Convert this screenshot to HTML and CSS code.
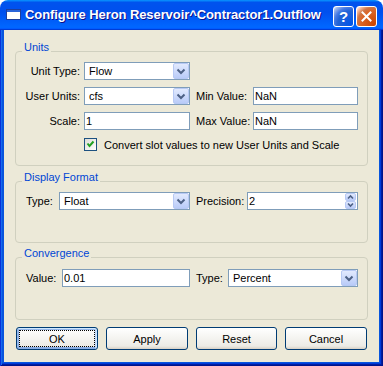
FILE: index.html
```html
<!DOCTYPE html>
<html>
<head>
<meta charset="utf-8">
<link rel="stylesheet" href="styles.css">
</head>
<body>
<div class="window">
  <div class="titlebar">
    <svg class="app-icon" width="16" height="16" viewBox="0 0 16 16">
      <rect x="1.5" y="3.5" width="14" height="10" fill="#fff" stroke="#1d3f9c"/>
      <rect x="2" y="4" width="13" height="2" fill="#2a64d8"/>
    </svg>
    <span class="title">Configure Heron Reservoir^Contractor1.Outflow</span>
    <div class="caption-buttons">
      <span class="cbtn help">?</span>
      <span class="cbtn close"><svg width="13" height="13" viewBox="0 0 13 13"><path d="M2.5 2.5 L10.5 10.5 M10.5 2.5 L2.5 10.5" stroke="#fff" stroke-width="2" stroke-linecap="square"/></svg></span>
    </div>
  </div>
  <div class="frame">
    <div class="client">
      <section class="group units">
        <div class="group-title">Units</div>
        <div class="units-grid">
          <span class="lbl right">Unit Type:</span>
          <div class="combo"><span class="val">Flow</span><span class="drop"><svg width="14" height="14" viewBox="0 0 14 14"><path d="M3.5 5.5 L7 9 L10.5 5.5" fill="none" stroke="#4d6185" stroke-width="2"/></svg></span></div>
          <span></span><span></span>

          <span class="lbl right">User Units:</span>
          <div class="combo"><span class="val">cfs</span><span class="drop"><svg width="14" height="14" viewBox="0 0 14 14"><path d="M3.5 5.5 L7 9 L10.5 5.5" fill="none" stroke="#4d6185" stroke-width="2"/></svg></span></div>
          <span class="lbl pad">Min Value:</span>
          <div class="field">NaN</div>

          <span class="lbl right">Scale:</span>
          <div class="field">1</div>
          <span class="lbl pad">Max Value:</span>
          <div class="field">NaN</div>

          <div class="check-row">
            <span class="checkbox"><svg width="11" height="11" viewBox="0 0 11 11"><path d="M2.5 4.5 L4.5 7 L8.5 2.5" fill="none" stroke="#21a121" stroke-width="2"/></svg></span>
            <span>Convert slot values to new User Units and Scale</span>
          </div>
        </div>
      </section>

      <section class="group display">
        <div class="group-title">Display Format</div>
        <div class="row">
          <span class="lbl w33">Type:</span>
          <div class="combo w131"><span class="val">Float</span><span class="drop"><svg width="14" height="14" viewBox="0 0 14 14"><path d="M3.5 5.5 L7 9 L10.5 5.5" fill="none" stroke="#4d6185" stroke-width="2"/></svg></span></div>
          <span class="lbl pad w57">Precision:</span>
          <div class="field w111"><span class="val">2</span>
            <span class="spin">
              <span class="spin-btn"><svg width="9" height="6" viewBox="0 0 9 6"><path d="M2 4.5 L4.5 2 L7 4.5" fill="none" stroke="#4d6185" stroke-width="1.6"/></svg></span>
              <span class="spin-btn"><svg width="9" height="6" viewBox="0 0 9 6"><path d="M2 1.5 L4.5 4 L7 1.5" fill="none" stroke="#4d6185" stroke-width="1.6"/></svg></span>
            </span>
          </div>
        </div>
      </section>

      <section class="group convergence">
        <div class="group-title">Convergence</div>
        <div class="row">
          <span class="lbl w36">Value:</span>
          <div class="field w128">0.01</div>
          <span class="lbl pad w38">Type:</span>
          <div class="combo w130"><span class="val">Percent</span><span class="drop"><svg width="14" height="14" viewBox="0 0 14 14"><path d="M3.5 5.5 L7 9 L10.5 5.5" fill="none" stroke="#4d6185" stroke-width="2"/></svg></span></div>
        </div>
      </section>

      <div class="buttons">
        <button class="btn default">OK</button>
        <button class="btn">Apply</button>
        <button class="btn">Reset</button>
        <button class="btn">Cancel</button>
      </div>
    </div>
  </div>
</div>
</body>
</html>
```

FILE: styles.css
```css
* { box-sizing: border-box; }
html, body { margin: 0; padding: 0; }
body {
  width: 383px;
  height: 366px;
  overflow: hidden;
  background: #ffffff;
  font-family: "Liberation Sans", Arial, sans-serif;
  font-size: 11px;
  color: #000;
}
.window {
  width: 383px;
  height: 366px;
  display: flex;
  flex-direction: column;
}
.titlebar {
  flex: none;
  height: 30px;
  display: flex;
  align-items: flex-start;
  padding: 0 6px 0 5px;
  border-radius: 8px 8px 0 0;
  background: linear-gradient(180deg, #0997ff, #0053ee 8%, #0050ee 40%, #0066ff 88%, #0066ff 93%, #005bff 95%, #003dd7 96%, #003dd7);
  color: #fff;
}
.app-icon { flex: none; margin-top: 6px; }
.title {
  flex: 1;
  margin: 7px 0 0 4px;
  font-weight: bold;
  font-size: 13px;
  line-height: 16px;
  white-space: nowrap;
  letter-spacing: -0.08px;
  text-shadow: 1px 1px #0f1089;
}
.caption-buttons { flex: none; display: flex; gap: 2px; margin-top: 6px; }
.cbtn {
  width: 21px;
  height: 21px;
  border: 1px solid #fff;
  border-radius: 3px;
  display: flex;
  align-items: center;
  justify-content: center;
}
.help {
  background: radial-gradient(circle at 90% 90%, #0054e9 0%, #2263d5 55%, #4479e4 70%, #a3bbec 90%, #fff 100%);
  font-weight: bold;
  font-size: 15px;
  color: #fff;
}
.close {
  background: radial-gradient(circle at 90% 90%, #cc4600 0, #dc6527 55%, #cd7546 70%, #ffccb2 90%, #fff 100%);
}
.frame {
  flex: 1;
  display: flex;
  padding: 0 4px 4px;
  background: #0855dd;
  box-shadow: inset 1px 0 #0831d9, inset -1px 0 #00138c, inset 0 -1px #00138c,
              inset 2px 0 #166aee, inset -2px 0 #001ea0, inset 0 -2px #001ea0,
              inset -3px 0 #003bda, inset 0 -3px #003bda;
}
.client {
  flex: 1;
  background: #ece9d8;
  padding: 21px 11px 0 11px;
  display: flex;
  flex-direction: column;
}
.group {
  border: 1px solid #d0d0bf;
  border-radius: 4px;
}
.group-title {
  width: max-content;
  margin: -11px 0 0 6px;
  padding: 0 2px;
  line-height: 13px;
  color: #0046d5;
  background: #ece9d8;
}
.units { height: 115px; }
.display { height: 62px; margin-top: 15px; }
.convergence { height: 63px; margin-top: 14px; }

.units-grid {
  display: grid;
  grid-template-columns: 68px 106px 63px 105px;
  grid-template-rows: 18px 18px 18px 14px;
  row-gap: 7px;
  margin-top: 8px;
}
.lbl {
  display: flex;
  align-items: center;
  white-space: nowrap;
}
.lbl.right { justify-content: flex-end; padding-right: 4px; }
.lbl.pad { padding-left: 6px; }
.combo, .field {
  height: 18px;
  border: 1px solid #7f9db9;
  background: #fff;
  display: flex;
  align-items: center;
}
.combo { padding-left: 4px; }
.field { padding-left: 1px; }
.val { flex: 1; }
.drop {
  flex: none;
  width: 16px;
  height: 16px;
  border-radius: 2px;
  border: 1px solid #b7c9f4;
  background: linear-gradient(180deg, #e2eafe, #b9cbf8);
  display: flex;
  align-items: center;
  justify-content: center;
}
.check-row {
  grid-column: 2 / 5;
  display: flex;
  align-items: center;
  gap: 7px;
  margin-top: 1px;
  white-space: nowrap;
}
.checkbox {
  flex: none;
  width: 13px;
  height: 13px;
  border: 1px solid #1c5180;
  background: linear-gradient(135deg, #dcdcd7, #fff);
  display: flex;
  align-items: center;
  justify-content: center;
}
.row {
  display: flex;
  padding-left: 10px;
  margin-top: 8px;
}
.convergence .row { margin-top: 9px; }
.w33 { width: 33px; }
.w36 { width: 36px; }
.w38 { width: 38px; }
.w57 { width: 57px; }
.w111 { width: 111px; }
.w128 { width: 128px; }
.w130 { width: 130px; }
.w131 { width: 131px; }
.spin {
  flex: none;
  width: 11px;
  height: 16px;
  margin-right: 1px;
  display: flex;
  flex-direction: column;
}
.spin-btn {
  flex: 1;
  border: 1px solid #b7c9f4;
  border-radius: 2px;
  background: linear-gradient(180deg, #e2eafe, #b9cbf8);
  display: flex;
  align-items: center;
  justify-content: center;
}
.buttons {
  display: grid;
  grid-template-columns: 82px 82px 81px 82px;
  column-gap: 8px;
  margin: 7px 0 0 1px;
}
.btn {
  height: 23px;
  padding: 0;
  border: 1px solid #003c74;
  border-radius: 3px;
  background: linear-gradient(180deg, #fff, #ecebe5 86%, #d8d0c4);
  font-family: inherit;
  font-size: 11px;
  color: #000;
}
.btn.default {
  box-shadow: inset -1px 1px #cee7ff, inset 1px 2px #98b8ea, inset -2px 2px #bcd4f6, inset 1px -1px #89ade4, inset 2px -2px #89ade4;
  outline: 1px dotted #000;
  outline-offset: -4px;
}
```
